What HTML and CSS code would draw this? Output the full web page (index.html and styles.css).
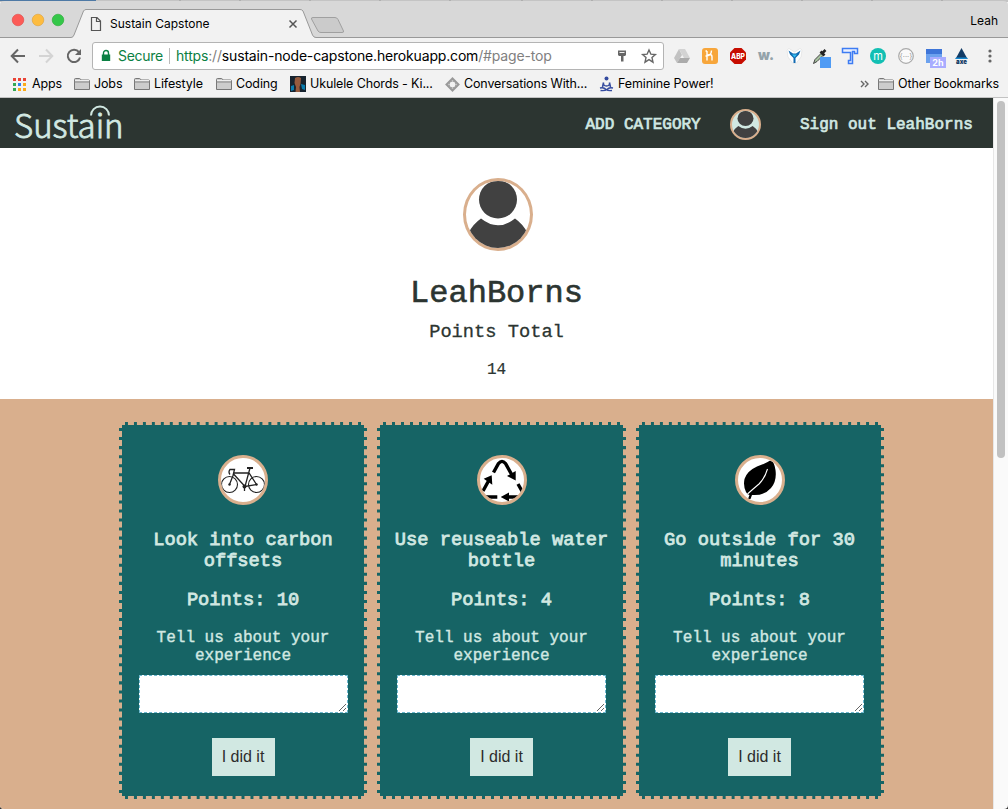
FILE: index.html
```html
<!DOCTYPE html>
<html lang="en">
<head>
<meta charset="utf-8">
<title>Sustain Capstone</title>
<link rel="stylesheet" href="styles.css">
</head>
<body>
<svg class="defs" aria-hidden="true">
  <symbol id="folder" viewBox="0 0 16 14"><path d="M.5 12.500V2.500q0-1 1-1h4q.7 0 1 .8l.4.7h7.600q1 0 1 1v8.500z" fill="#ccc" stroke="#777"/><path d="M1 3.500h14" stroke="#eee"/><path d="M.5 5h15" stroke="#888"/></symbol>
  <symbol id="person" viewBox="0 0 64 67"><circle cx="32" cy="18.500" r="19"/><path d="M15 37.500Q32 51 49 37.500Q57 43 61.500 52L58 67H6L2.500 52Q7 43 15 37.500Z"/></symbol>
</svg>
<div class="window">
  <header class="chrome">
    <div class="tabs">
      <svg class="tabstrip" width="1008" height="38" viewBox="0 0 1008 38">
        <path d="M0 0H1008V2H0z" fill="#c4c4c4"/><path d="M0 0H96V1H0z" fill="#4e79a5"/>
        <path d="M180 0v1M240 0v1M310 0v1M380 0v1M450 0v1M522 0v1M592 0v1M662 0v1M732 0v1M802 0v1M872 0v1M942 0v1" stroke="#999"/>
        <path d="M0 38V5Q0 1 5 1H1003Q1008 1 1008 5V38z" fill="#d8d8d8"/>
        <path d="M0 37.500H71Q73 37.500 74 35L83.500 11Q84.500 9.500 86 9.500H300Q302 9.500 303 11L312.500 35Q313.500 37.500 316 37.500H1008" fill="#f2f2f2" stroke="#999"/>
        <path d="M73 37.500H314" stroke="#f2f2f2"/>
        <path d="M313 17.500H335Q337 17.500 338 19.500L343.500 31Q344 32.500 342 32.500H321Q319 32.500 318 31L311.500 19Q311 17.500 313 17.500z" fill="#cbcbcb" stroke="#a0a0a0"/>
        <g stroke-width=".6"><circle cx="18" cy="20" r="5.800" fill="#fc5b57" stroke="#df4744"/><circle cx="38" cy="20" r="5.800" fill="#fdbc40" stroke="#dfa034"/><circle cx="58" cy="20" r="5.800" fill="#34c749" stroke="#27a833"/></g>
        <path d="M91.500 17.500H97L100.500 21V30.500H91.500zM96.500 17.500V21.500H100.500" fill="none" stroke="#555" stroke-width="1.200"/>
        <path d="M289.500 20.500l7 7m0-7l-7 7" stroke="#555" stroke-width="1.500"/>
      </svg>
      <span class="tab-title">Sustain Capstone</span><span class="profile">Leah</span>
    </div>
    <div class="toolbar">
      <svg class="navicons" width="92" height="30" viewBox="0 0 92 30">
        <g fill="none" stroke-width="2"><path d="M25 18H12M18 11.500L11.700 18L18 24.500" stroke="#666"/><path d="M39 18H52M46 11.500L52.300 18L46 24.500" stroke="#d4d4d4"/><path d="M79 14.200A6.200 6.200 0 1 0 80 19.500" stroke="#666"/></g><path d="M81 11V17H75z" fill="#666"/>
      </svg>
      <div class="omnibox">
        <svg width="10" height="14" viewBox="0 0 10 14"><path d="M2.500 6V4a2.500 2.500 0 0 1 5 0v2" fill="none" stroke="#0b8043" stroke-width="1.400"/><path d="M.8 5.500h8.400v6.500H.8z" fill="#0b8043"/></svg>
        <span class="secure">Secure</span><span class="url"><b>https</b><i>://</i>sustain-node-capstone.herokuapp.com<i>/#page-top</i></span>
        <svg class="keystar" width="44" height="18" viewBox="0 0 44 18"><path d="M4 3.500h8v4.500l-1 1h-1.500v5.500h-2.500V9H5L4 8z" fill="#666"/><path d="M5.500 5.500h5" stroke="#eee"/><path d="M35 3l1.900 4.200 4.500.4-3.400 3 1 4.600-4-2.500-4 2.500 1-4.600-3.400-3 4.500-.4z" fill="none" stroke="#666" stroke-width="1.400"/></svg>
      </div>
      <div class="extensions">
        <svg viewBox="0 0 28 28"><path d="M11 7h6l5 9h-6z" fill="#d3d3d3"/><path d="M11 7l3 6-5 8-3-5z" fill="#c2c2c2"/><path d="M9 21l3-5h10l-3 5z" fill="#ababab"/></svg>
        <svg viewBox="0 0 28 28"><rect x="6" y="6" width="16" height="16" rx="3" fill="#f7a63b"/><path d="M11 9v9.500M11 14q1-1.500 3-1.500 2 0 2 2.500v3.500M9.500 9H11M9.500 14q6 0 6-5.500" fill="none" stroke="#fff" stroke-width="1.400"/></svg>
        <svg viewBox="0 0 28 28"><path d="M10.500 6h7L22 10.500v7L17.500 22h-7L6 17.500v-7z" fill="#c70d00"/><text x="7" y="16.700" font-size="7" font-weight="800" fill="#fff" textLength="14" lengthAdjust="spacingAndGlyphs">ABP</text></svg>
        <svg viewBox="0 0 28 28"><text x="6" y="18" font-size="14" font-weight="900" fill="#94a3aa" textLength="16" lengthAdjust="spacingAndGlyphs">w.</text></svg>
        <svg viewBox="0 0 28 28"><path d="M7 8l2-1.500 5.500 3.500L20 6.500l2 1.500-1 7-5 6.500h-3L8 15z" fill="#fff" stroke="#ddd" stroke-width=".6"/><path d="M8.500 8.500l4.500 3h3l4.500-3-1.500 4-3.500 3.500v5h-2v-5L10 12.500z" fill="#126ab1"/><path d="M12 12.500h5l-2.500 3z" fill="#35bff0"/></svg>
        <svg viewBox="0 0 28 28"><path d="M5.500 21.500l1.500-4 6-6 2 2-6 6z" fill="#a8c3a0" stroke="#444"/><path d="M12.500 9.500l4 4M14.500 11l3-3" stroke="#222" stroke-width="2.600"/><rect x="12" y="15" width="11" height="11" fill="#4f9bf4"/></svg>
        <svg viewBox="0 0 28 28"><path d="M6.500 6.500h15v5h-3v-2h-2v12h-4V18.500h2v-8h-8z" fill="#eaf0ff" stroke="#3d7cf3" stroke-width="1.500"/></svg>
        <svg viewBox="0 0 28 28"><circle cx="14" cy="14" r="8" fill="#12bfb3"/><text x="14" y="17.500" text-anchor="middle" font-size="11" fill="#fff">m</text></svg>
        <svg viewBox="0 0 28 28"><circle cx="14" cy="14" r="7.300" fill="#fafafa" stroke="#aaa" stroke-width="1.200"/><text x="14" y="16.500" text-anchor="middle" font-size="7.500" fill="#999">{···}</text></svg>
        <svg viewBox="0 0 28 28"><path d="M6 7h16v14H6z" fill="#6ca1ee"/><path d="M6 7h16v5H6z" fill="#3e75d8"/><rect x="10" y="15" width="16" height="11" fill="#a9acff"/><text x="18" y="24" text-anchor="middle" font-size="9" font-weight="700" fill="#fff">2h</text></svg>
        <svg viewBox="0 0 28 28"><path d="M13.500 6l6 11h-12z" fill="#123b65"/><path d="M8 15.500h11l.8 1.500H7.200z" fill="#1486ce"/><text x="8" y="21.800" font-size="6.500" font-weight="900" fill="#123b65" textLength="11" lengthAdjust="spacingAndGlyphs">axe</text></svg>
        <svg viewBox="0 0 28 28"><g fill="#666"><circle cx="14" cy="9" r="1.600"/><circle cx="14" cy="14" r="1.600"/><circle cx="14" cy="19" r="1.600"/></g></svg>
      </div>
    </div>
    <nav class="bookmarks">
      <a class="bm apps"><svg width="14" height="14" viewBox="0 0 14 14"><path d="M1 2.500h13" stroke="#ea4335" stroke-width="3" stroke-dasharray="3 2"/><path d="M1 7.500h3" stroke="#34a853" stroke-width="3"/><path d="M6 7.500h3" stroke="#2f80ed" stroke-width="3"/><path d="M11 7.500h3M6 12.500h3M11 12.500h3" stroke="#fbab18" stroke-width="3"/><path d="M1 12.500h3" stroke="#34a853" stroke-width="3"/></svg><span>Apps</span></a>
      <a class="bm jobs"><svg class="ic"><use href="#folder"/></svg><span>Jobs</span></a>
      <a class="bm life"><svg class="ic"><use href="#folder"/></svg><span>Lifestyle</span></a>
      <a class="bm coding"><svg class="ic"><use href="#folder"/></svg><span>Coding</span></a>
      <a class="bm uke"><svg width="16" height="16" viewBox="0 0 16 16"><path d="M0 0h16v16H0z" fill="#17232e"/><path d="M5 2q3-2 6 0l-.5 6-1 3 .5 5H5.500l.5-5-1.500-4z" fill="#955b3e"/><path d="M1 10l3-1v5l-3 1zM11 8l4 1v5l-3-1z" fill="#087cae"/></svg><span>Ukulele Chords - Ki...</span></a>
      <a class="bm conv"><svg width="15" height="15" viewBox="0 0 15 15"><path d="M7.500 1.500l6 6-6 6-6-6z" fill="none" stroke="#999" stroke-width="2"/><circle cx="7.500" cy="7.500" r="3.500" fill="#f2f2f2" stroke="#999"/></svg><span>Conversations With...</span></a>
      <a class="bm fem"><svg width="15" height="16" viewBox="0 0 15 16"><circle cx="7.500" cy="2.500" r="2" fill="#344b9f"/><path d="M4.500 6.500Q4 10 7.500 10T10.500 6.500M4.500 6.500L3.500 11M10.500 6.500L11.500 11M1 12q4-1 6 1.500 2 1.500 6 1M14 12q-4-1-6 1.500-2 1.500-6.500 1" fill="none" stroke="#344b9f" stroke-width="1.500"/></svg><span>Feminine Power!</span></a>
      <svg class="more" width="14" height="14" viewBox="0 0 14 14"><path d="M1 4l3 3-3 3M5 4l3 3-3 3" fill="none" stroke="#666" stroke-width="1.400"/></svg>
      <a class="bm"><svg class="ic"><use href="#folder"/></svg><span>Other Bookmarks</span></a>
    </nav>
  </header>
  <div class="viewport">
    <main class="page">
      <nav class="site-nav">
        <span class="logo">Sustain<svg class="arch" width="22" height="14" viewBox="0 0 22 14"><path d="M2 11.500A9 9 0 0 1 20 11.500" fill="none" stroke="#d1e8e2" stroke-width="2"/></svg></span>
        <a class="add">ADD CATEGORY</a>
        <span class="avatar small"><svg viewBox="0 0 64 67" preserveAspectRatio="none"><use href="#person"/></svg></span>
        <a class="signout">Sign out LeahBorns</a>
      </nav>
      <section class="profile-box">
        <span class="avatar"><svg viewBox="0 0 64 67"><use href="#person"/></svg></span>
        <h1>LeahBorns</h1>
        <h2>Points Total</h2>
        <p>14</p>
      </section>
      <section class="cards">
        <article class="card">
          <svg class="badge" viewBox="0 0 44 44"><g fill="none" stroke="#222" stroke-width="1.100"><circle cx="8.500" cy="26.500" r="8"/><circle cx="35.500" cy="26.500" r="8"/><path d="M8.500 26.500L13 15H28L35.500 26.500L24 28.500L13 16.500M24 28.500L29 10M12 17.500L13.500 11.500H9Q7 14 9 16.500M23.500 27v6" stroke-width="1.300"/><path d="M26 10h6" stroke-width="2"/></g><g fill="#222"><circle cx="23.500" cy="28.500" r="2"/><circle cx="8.500" cy="26.500" r="1.200"/><circle cx="35.500" cy="26.500" r="1.200"/></g></svg>
          <h3>Look into carbon offsets</h3><h3 class="pts">Points: 10</h3>
          <label>Tell us about your experience</label><textarea></textarea><button>I did it</button>
        </article>
        <article class="card wide">
          <svg class="badge" viewBox="0 0 44 44"><g fill="none" stroke="#000" stroke-width="3.400"><path d="M13.500 14.500L18.500 5.500Q22 1.200 25.500 5.500L32 17M3 33L8.500 23M38 26L42.500 34M5 39H17.300M27 39H39"/></g><path d="M35.700 22.500L27 18L35.700 13zM11.700 17.300L3.700 20.700L12.300 26.700zM20.700 39L29 34.500V43.500z"/></svg>
          <h3>Use reuseable water bottle</h3><h3 class="pts">Points: 4</h3>
          <label>Tell us about your experience</label><textarea></textarea><button>I did it</button>
        </article>
        <article class="card last">
          <svg class="badge" viewBox="0 0 44 44"><path d="M32.500 2.300Q36 3 37.500 12Q39 23 33 30Q26 38 14 37L12.500 41L10 41L11.500 37Q9 36.500 8 34Q5 28 6.500 21Q9 13 19 8.500Q29 5 32.500 2.300z"/><path d="M29.500 11Q27 20 21 26Q15 31 9.500 36" fill="none" stroke="#fff" stroke-width="1.100"/></svg>
          <h3>Go outside for 30 minutes</h3><h3 class="pts">Points: 8</h3>
          <label>Tell us about your experience</label><textarea></textarea><button>I did it</button>
        </article>
      </section>
    </main>
    <div class="scrollbar"><div class="thumb"></div></div>
  </div>
</div>
</body>
</html>
```
FILE: styles.css
```css
* { box-sizing: border-box; }
body { margin: 0; background: #333; overflow: hidden; }
.defs { position: absolute; width: 0; height: 0; }
.window { width: 1008px; height: 809px; display: flex; flex-direction: column; border-radius: 0 0 4px 4px; overflow: hidden; }
svg { display: block; flex: none; }

/* browser chrome */
.chrome { height: 98px; flex: none; background: #f2f2f2; border-bottom: 1px solid #c2c2c2; font: 12.5px/16px Inter, sans-serif; letter-spacing: -.13px; color: #000; white-space: nowrap; }
.tabs { height: 38px; position: relative; display: flex; align-items: flex-start; justify-content: space-between; padding: 16px 10px 0 110px; }
.tabstrip { position: absolute; left: 0; top: 0; }
.tab-title, .profile { position: relative; font-size: 12px; letter-spacing: 0; }
.profile { top: -3px; }
.toolbar { height: 34px; display: flex; align-items: flex-start; }
.omnibox { width: 572px; height: 28px; margin-top: 4px; padding-left: 8px; display: flex; align-items: center; background: #fff; border: 1px solid #b4b4b4; border-radius: 3px; font-size: 14px; letter-spacing: -.17px; }
.secure { color: #0b8043; width: 52px; margin-left: 7px; border-right: 1px solid #bbb; letter-spacing: -.3px; }
.url { margin-left: 6px; width: 430px; }
.url b { color: #0b8043; font-weight: 400; }
.url i { color: #808080; font-style: normal; }
.keystar { margin-left: 8px; }
.extensions { display: flex; margin: 4px 0 0 4px; }
.extensions svg { width: 28px; height: 28px; letter-spacing: 0; }
.bookmarks { height: 24px; display: flex; align-items: center; padding-left: 12px; }
.bm { display: flex; align-items: center; gap: 4px; flex: none; }
.ic { width: 16px; height: 14px; }
.apps { width: 62px; gap: 6px; }
.jobs { width: 60px; }
.life { width: 82px; }
.coding { width: 74px; }
.uke { width: 155px; }
.conv { width: 154px; }
.fem { width: 261px; }
.more { width: 14px; margin-right: 4px; }

/* page */
.viewport { flex: 1; display: flex; min-height: 0; }
.page { width: 993px; background: #fff; font-family: "Liberation Mono", monospace; color: #2c3531; display: flex; flex-direction: column; }
.scrollbar { width: 15px; background: #fafafa; border-left: 1px solid #e7e7e7; padding: 3px 3px 0; }
.thumb { width: 8px; height: 357px; border-radius: 4px; background: #c1c1c1; }
.site-nav { height: 50px; flex: none; background: #2c3531; color: #d1e8e2; display: flex; align-items: center; padding: 2px 20px 0 14px; font-size: 16px; line-height: 18px; -webkit-text-stroke: .7px; }
.logo { position: relative; width: 571.500px; font: 300 33px/48px "Noto Sans CJK SC", sans-serif; -webkit-text-stroke: .8px; }
.arch { position: absolute; left: 75px; top: 4px; }
.add { width: 144.500px; }
.add, .signout { padding-top: 2px; }
.avatar { width: 70px; height: 73px; border: 3px solid #d9af8d; border-radius: 50%; overflow: hidden; fill: #414141; display: block; }
.avatar svg { width: 100%; height: 100%; }
.avatar.small { width: 31px; height: 31px; border-width: 2px; background: #d1e8e2; margin-right: 39px; }
.profile-box { height: 251px; flex: none; display: flex; flex-direction: column; align-items: center; padding-top: 30px; }
.profile-box .avatar { margin-left: 3px; }
h1, h2, h3, p { margin: 0; font-weight: 400; }
h1 { font-size: 32px; line-height: 36px; margin-top: 25px; -webkit-text-stroke: .6px; }
h2 { font-size: 18.720px; line-height: 21px; margin-top: 10px; -webkit-text-stroke: .3px; }
.profile-box p { font-size: 16px; line-height: 18px; margin-top: 18px; -webkit-text-stroke: .2px; }
.cards { flex: 1; background: #d9af8d; display: flex; gap: 10px; padding: 23px 0 0 119px; align-items: flex-start; }
.card { width: 248px; height: 377px; flex: none; background: #166465; border: 3px dashed #d9af8d; color: #d1e8e2; display: flex; flex-direction: column; align-items: center; padding-top: 30px; text-align: center; }
.card.wide { width: 249px; }
.card.last { padding-right: 1px; }
.wide .badge { margin-left: 1px; }
.badge { width: 50px; height: 50px; border-radius: 50%; border: 3px solid #d9af8d; background: #fff; margin-bottom: 25px; }
h3 { font-size: 18.720px; line-height: 21px; width: 225px; -webkit-text-stroke: .8px; }
.pts { margin-top: 18px; }
label { font-size: 16px; line-height: 18px; width: 210px; margin-top: 18px; -webkit-text-stroke: .4px; }
textarea { width: 209px; height: 38px; margin: 10px 0 25px; border: 1px dashed #6cb8cf; background: #fff; resize: both; flex: none; }
button { width: 63px; height: 38px; border: 0; padding: 0; background: #d1e8e2; color: #2c2c2c; font: 16px/18px "Liberation Sans", sans-serif; }
```
